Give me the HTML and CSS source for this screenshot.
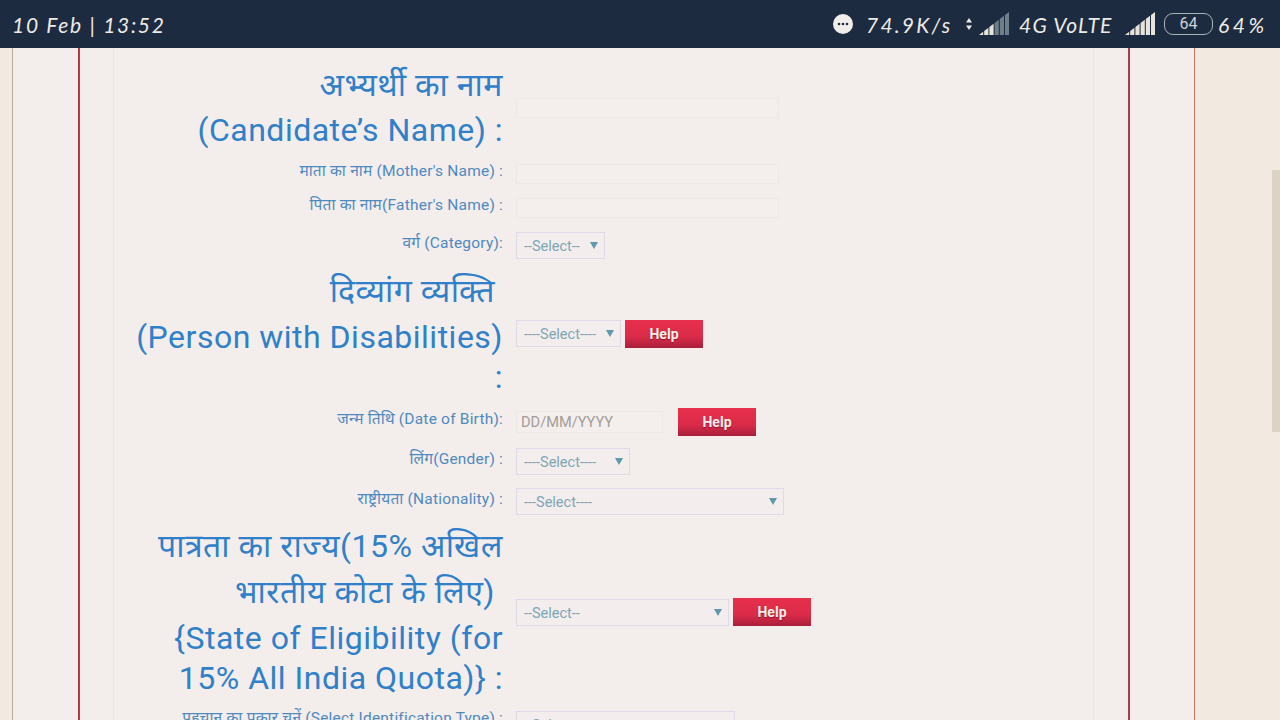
FILE: index.html
```html
<!DOCTYPE html>
<html lang="hi">
<head>
<meta charset="utf-8">
<title>Registration form</title>
<link rel="stylesheet" href="styles.css">
</head>
<body>
<div class="page">
  <header class="statusbar">
    <div class="clock">10 Feb | 13:52</div>
    <div class="status-right">
      <svg class="dots" width="20" height="20" viewBox="0 0 20 20"><circle cx="10" cy="10" r="10" fill="#f1eeea"/><circle cx="6" cy="10" r="1.3" fill="#1c2b40"/><circle cx="10" cy="10" r="1.3" fill="#1c2b40"/><circle cx="14" cy="10" r="1.3" fill="#1c2b40"/></svg>
      <span class="speed">74.9K/s</span>
      <svg class="updown" width="6" height="12" viewBox="0 0 6 12"><path d="M3 0l3 4.500H0zM3 12L0 7.500h6z" fill="#eeeae4"/></svg>
      <svg class="signal" width="30" height="23" viewBox="0 0 30 23"><path d="M0 23L4.200 19.800V23zM5.200 19L9.400 15.800V23H5.200zM10.400 15L14.600 11.800V23H10.400z" fill="#e8e4dc"/><path d="M15.600 11L19.800 7.800V23H15.600zM20.800 7L25 3.800V23H20.800zM26 3L30 0V23H26z" fill="#6f7f87"/></svg>
      <span class="network">4G VoLTE</span>
      <svg class="signal full" width="30" height="23" viewBox="0 0 30 23"><path d="M0 23L4.200 19.800V23zM5.200 19L9.400 15.800V23H5.200zM10.400 15L14.600 11.800V23H10.400zM15.600 11L19.800 7.800V23H15.600zM20.800 7L25 3.800V23H20.800zM26 3L30 0V23H26z" fill="#e8e4dc"/></svg>
      <span class="battery">64</span>
      <span class="percent">64%</span>
    </div>
  </header>
  <main class="viewport">
    <div class="outer">
      <div class="frame">
        <form class="form">
          <div class="row row-name">
            <div class="label big"><div class="line">अभ्यर्थी का नाम</div><div class="line">(Candidate’s Name) :</div></div>
            <div class="controls"><input class="text name" type="text"></div>
          </div>
          <div class="row row-34">
            <div class="label">माता का नाम (Mother's Name) :</div>
            <div class="controls"><input class="text name" type="text"></div>
          </div>
          <div class="row row-34">
            <div class="label">पिता का नाम(Father's Name) :</div>
            <div class="controls"><input class="text name" type="text"></div>
          </div>
          <div class="row row-41">
            <div class="label">वर्ग (Category):</div>
            <div class="controls"><div class="select w-category"><select><option>--Select--</option></select></div></div>
          </div>
          <div class="row row-disab">
            <div class="label big"><div class="line indent">दिव्यांग व्यक्ति</div><div class="line">(Person with Disabilities)</div><div class="line short">:</div></div>
            <div class="controls"><div class="select w-disab"><select><option>----Select----</option></select></div><button class="help gap-4" type="button">Help</button></div>
          </div>
          <div class="row row-40">
            <div class="label low">जन्म तिथि (Date of Birth):</div>
            <div class="controls"><input class="text dob" type="text" placeholder="DD/MM/YYYY"><button class="help gap-15" type="button">Help</button></div>
          </div>
          <div class="row row-41">
            <div class="label">लिंग(Gender) :</div>
            <div class="controls"><div class="select w-gender"><select><option>----Select----</option></select></div></div>
          </div>
          <div class="row row-39">
            <div class="label">राष्ट्रीयता (Nationality) :</div>
            <div class="controls"><div class="select w-nation"><select><option>---Select----</option></select></div></div>
          </div>
          <div class="row row-state">
            <div class="label big"><div class="line">पात्रता का राज्य(15% अखिल</div><div class="line indent">भारतीय कोटा के लिए)</div><div class="line">{State of Eligibility (for</div><div class="line short">15% All India Quota)} :</div></div>
            <div class="controls"><div class="select w-state"><select><option>--Select--</option></select></div><button class="help gap-4 up" type="button">Help</button></div>
          </div>
          <div class="row row-40">
            <div class="label high">पहचान का प्रकार चुनें (Select Identification Type) :</div>
            <div class="controls"><div class="select w-id"><select><option>--Select--</option></select></div></div>
          </div>
        </form>
      </div>
    </div>
    <div class="scrollthumb"></div>
  </main>
</div>
</body>
</html>
```
FILE: styles.css
```css
* { box-sizing: border-box; }
html, body { margin: 0; padding: 0; height: 100%; }
body { font-family: Roboto, "Noto Sans", "Liberation Sans", sans-serif; background: #f2e9e0; overflow: hidden; }
.page { display: flex; flex-direction: column; height: 720px; }

.statusbar { flex: 0 0 48px; background: #1c2b40; color: #eeeae4; display: flex; align-items: center; justify-content: space-between; padding: 0 14px 0 12px; font-family: "Lato", sans-serif; font-size: 21px; font-style: italic; letter-spacing: 1.700px; white-space: nowrap; }
.status-right { display: flex; align-items: center; }
.dots { margin-right: 13px; }
.speed { width: 100px; letter-spacing: 2.200px; }
.updown { margin-right: 7px; }
.signal { margin-top: -2px; margin-right: 10px; }
.network { width: 106px; letter-spacing: 1.200px; }
.signal.full { margin-right: 9px; }
.battery { width: 49px; height: 22px; border: 1.500px solid #a9b2ba; border-radius: 9px; font: 16px/19px Roboto, sans-serif; letter-spacing: 0; text-align: center; color: #cfd2d4; margin-right: 5px; }
.percent { width: 48px; letter-spacing: 3.500px; }

.viewport { flex: 1; position: relative; overflow: hidden; display: flex; }
.outer { width: 1183px; margin-left: 12px; padding-left: 65px; background: #f3edeb; border-left: 1px solid #b9ab9a; border-right: 1px solid #c9775c; }
.frame { width: 1052px; height: 100%; padding: 0 34px 0 33px; border-left: 2px solid #b8364a; border-right: 2px solid #a83a50; }
.form { min-height: 100%; padding-top: 14px; border-left: 1px solid #e7e4ec; border-right: 1px solid #e7e4ec; width: 981px; }

.row { display: grid; grid-template-columns: 389px 1fr; column-gap: 13px; align-items: center; }
.row-name { height: 92px; margin-bottom: 3px; }
.row-34 { height: 34px; }
.row-41 { height: 41px; }
.row-40 { height: 40px; }
.row-39 { height: 39px; }
.row-disab { height: 135px; }
.row-state { height: 183px; }

.label { text-align: right; color: #4f8abf; font-size: 15.500px; line-height: 20px; padding-bottom: 6px; white-space: nowrap; letter-spacing: 0.200px; }
.label.low { padding-bottom: 4px; }
.label.high { padding-bottom: 13px; }
.label.big { color: #2f80c9; font-size: 32px; letter-spacing: 0.500px; line-height: 46px; padding-bottom: 5px; }
.row-name .label.big { line-height: 45px; padding-bottom: 0; }
.row-state .label.big { padding-bottom: 6px; }
.line.indent { padding-right: 8px; }
.line.short { line-height: 35px; }

.controls { display: flex; align-items: center; }
.text { height: 20px; background: #f4efed; border: 1px solid #ece8e6; padding: 0 4px; font: 14.600px Roboto, sans-serif; outline: none; }
.text.name { width: 263px; }
.text.dob { width: 147px; height: 22px; margin-top: 2px; }
.text::placeholder { color: #a39d99; opacity: 1; }

.select { position: relative; height: 27px; }
.select select { appearance: none; width: 100%; height: 100%; background: #f3eeed; border: 1px solid #dedbe6; border-radius: 0; padding: 2px 0 0 7px; font: 14.500px Roboto, sans-serif; color: #7da6b6; outline: none; }
.select::after { content: ""; position: absolute; top: 10px; right: 7px; border-left: 4px solid transparent; border-right: 4px solid transparent; border-top: 7px solid #5d99aa; }
.w-category { width: 89px; }
.w-disab { width: 105px; }
.w-gender { width: 113.500px; }
.w-nation { width: 267.500px; }
.w-state { width: 213px; }
.w-id { width: 218.500px; }

.help { width: 78px; height: 28px; padding: 0; border: 0; background: linear-gradient(#e72f4c 0%, #da2b48 60%, #a91f3b 100%); color: #f6eee9; font: bold 14px Roboto, sans-serif; text-shadow: 0 1px 1px rgba(80,0,20,.5); }
.gap-4 { margin-left: 4px; }
.gap-15 { margin-left: 15px; margin-top: 2px; }
.up { margin-bottom: 2px; }

.scrollthumb { position: absolute; top: 122px; right: 0; width: 8px; height: 262px; background: #dcd2c5; }
```
